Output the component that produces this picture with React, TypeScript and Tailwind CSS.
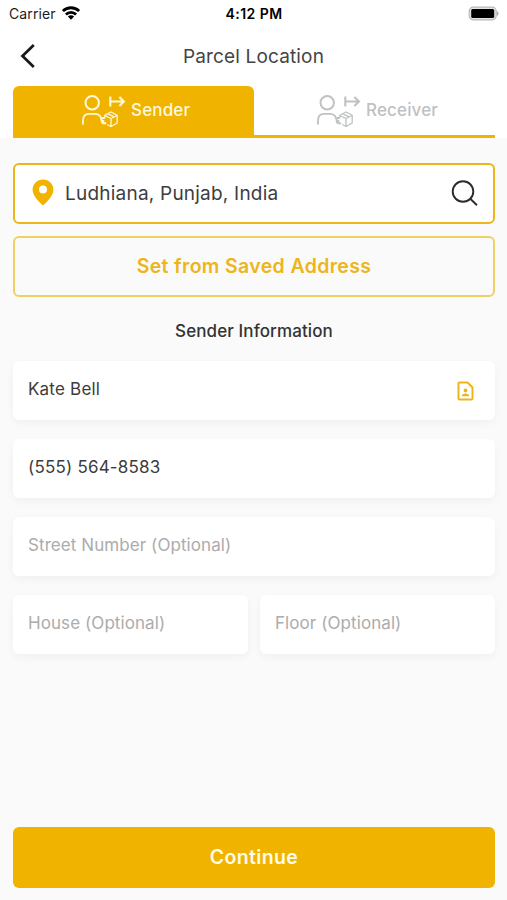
import clsx from "clsx";

type FieldProps = {
  value?: string;
  placeholder?: string;
  icon?: React.ReactNode;
};

function ParcelIcon() {
  return (
    <svg width="46" height="36" viewBox="0 0 46 36" fill="none" stroke="currentColor">
      <circle cx="12.2" cy="10.8" r="6.7" strokeWidth="2" />
      <path
        d="M3 32.5V28.5C3 24.3 5.2 21.9 9 21.9h6.4c4 0 6.3 2.5 6.7 9.3M22 26h2.6M22.3 29h2M22.2 31.3h4"
        strokeWidth="1.9"
      />
      <path d="M30.3 4.5v10M31 9.5h12.5M39.4 5l4.5 4.5-4.5 4.5" strokeWidth="2.1" />
      <path
        d="M24.8 26.5v-3.2l6.2-3.3 6.2 3.3v7.7l-6.2 3.5-3.8-2M24.8 23.5l6.2 3 6.2-3M31 26.5v8M28 21.8l6.2 3"
        strokeWidth="1.3"
        strokeLinejoin="round"
      />
    </svg>
  );
}

function StatusBar() {
  return (
    <div className="flex h-7 items-center justify-between pb-0.5 pl-[9px] pr-[8px] text-[14px] text-[#1c1c1c]">
      <div className="flex w-40 items-center gap-1.5">
        <span className="tracking-[0.1px]">Carrier</span>
        <svg width="18" height="14" viewBox="0 0 18 14" fill="none" stroke="#000" strokeWidth="2.8">
          <path d="M.9 5.1a11.5 11.5 0 0 1 16.2 0M3.9 8.4a7.2 7.2 0 0 1 10.2 0" />
          <path d="M9 13.7 5.9 10.6a4.4 4.4 0 0 1 6.2 0Z" fill="#000" stroke="none" />
        </svg>
      </div>
      <span className="text-[14px] font-semibold tracking-[0.45px] text-black">4:12 PM</span>
      <div className="flex w-40 justify-end">
        <svg width="31" height="15" viewBox="0 0 31 15">
          <rect x="1.2" y="1.2" width="27" height="12.6" rx="4" fill="#e5e5e5" stroke="#b8b8b8" strokeWidth="1.2" />
          <rect x="3.2" y="3" width="23" height="9" rx="1.500" fill="#000" />
          <path d="M29 5.2c2 .7 2 3.8 0 4.5Z" fill="#aaa" />
        </svg>
      </div>
    </div>
  );
}

function Tab({ label, active }: { label: string; active?: boolean }) {
  return (
    <button
      className={clsx(
        "flex h-[52px] w-1/2 items-center",
        active
          ? "rounded-t-md bg-[#f0b400] pb-1 pl-[67px] text-[#fff8dc]"
          : "border-b-[3px] border-[#f0b400] pb-px pl-[61px] text-[#bfc1c3]"
      )}
    >
      <ParcelIcon />
      <span className="ml-[5px] pt-[2px] text-[17px] font-medium tracking-[0.15px]">{label}</span>
    </button>
  );
}

function Field({ value, placeholder, icon }: FieldProps) {
  return (
    <div className="flex h-[59px] flex-1 items-center justify-between rounded-md bg-white pl-[15px] pr-[21px] shadow-[0_3px_8px_rgba(0,0,0,0.045)]">
      <p
        className={clsx(
          "pb-[2px] text-[17px]",
          value ? "tracking-[0.2px] text-[#3c3c3c]" : "tracking-[0.08px] text-[#acacac]"
        )}
      >
        {value || placeholder}
      </p>
      {icon}
    </div>
  );
}

export default function App() {
  return (
    <div className="flex h-[900px] w-[507px] flex-col bg-[#fafafa] font-['Inter',sans-serif]">
      <header className="bg-white">
        <StatusBar />
        <div className="flex h-[58px] items-center pl-5">
          <svg className="-mt-0.5" width="16" height="26" viewBox="0 0 16 26" fill="none" stroke="#1a1a1a" strokeWidth="2.8">
            <path d="M13.8 2 2.5 13l11.3 11" />
          </svg>
          <h1 className="flex-1 pr-[36px] text-center text-[19px] tracking-[0.15px] text-[#444]">
            Parcel Location
          </h1>
        </div>
        <div className="flex pl-[13px] pr-3">
          <Tab label="Sender" active />
          <Tab label="Receiver" />
        </div>
      </header>

      <main className="flex flex-1 flex-col pb-3 pl-[13px] pr-3 pt-[25px]">
        <div className="flex h-[61px] items-center rounded-md border-2 border-[#edb51c] bg-white pl-[17px] pr-[14px]">
          <svg className="-mt-0.5" width="22" height="27" viewBox="0 0 22 27">
            <path
              d="M11 .4C5 .4.6 4.9.6 10.6c0 6.2 5.4 11.3 10.4 16 5-4.7 10.4-9.8 10.4-16C21.4 4.9 17 .4 11 .4Zm0 6.2a4 4 0 1 1 0 8 4 4 0 0 1 0-8Z"
              fill="#f0b400"
              fillRule="evenodd"
            />
          </svg>
          <span className="ml-[11px] flex-1 pt-0.5 text-[19px] tracking-[0.22px] text-[#3d3d3d]">
            Ludhiana, Punjab, India
          </span>
          <svg className="-mt-0.5" width="28" height="28" viewBox="0 0 28 28" fill="none" stroke="#2c2c2c" strokeWidth="1.9">
            <circle cx="12" cy="12.5" r="10.3" />
            <path d="m19.300 19.7 6.7 6.5" />
          </svg>
        </div>
        <button className="mt-3 h-[61px] rounded-md border-2 border-[#f2cf62] pt-px text-[19.5px] font-semibold tracking-[0.35px] text-[#edb51c]">
          Set from Saved Address
        </button>

        <h2 className="mt-[22px] text-center text-[17px] font-medium leading-6 tracking-[0.1px] text-[#333]">
          Sender Information
        </h2>

        <div className="mt-[18px] flex flex-col gap-[19px]">
          <div className="flex">
            <Field
              value="Kate Bell"
              icon={
                <svg width="17" height="20" viewBox="0 0 17 20" fill="none" stroke="#edb51c" strokeWidth="2">
                  <path d="M2.500 1.500h8l5 5v11a1 1 0 0 1-1 1h-12a1 1 0 0 1-1-1v-15a1 1 0 0 1 1-1Z" strokeLinejoin="round" />
                  <circle cx="8.500" cy="9.500" r="1.900" fill="#edb51c" stroke="none" />
                  <path d="M4.700 15.200c0-3.600 7.600-3.600 7.600 0Z" fill="#edb51c" stroke="none" />
                </svg>
              }
            />
          </div>
          <div className="flex">
            <Field value="(555) 564-8583" />
          </div>
          <div className="flex">
            <Field placeholder="Street Number (Optional)" />
          </div>
          <div className="flex gap-3">
            <Field placeholder="House (Optional)" />
            <Field placeholder="Floor (Optional)" />
          </div>
        </div>

        <button className="mt-auto h-[61px] rounded-md bg-[#f0b400] pt-px text-[19.5px] font-semibold tracking-[0.35px] text-[#fffbe8]">
          Continue
        </button>
      </main>
    </div>
  );
}
